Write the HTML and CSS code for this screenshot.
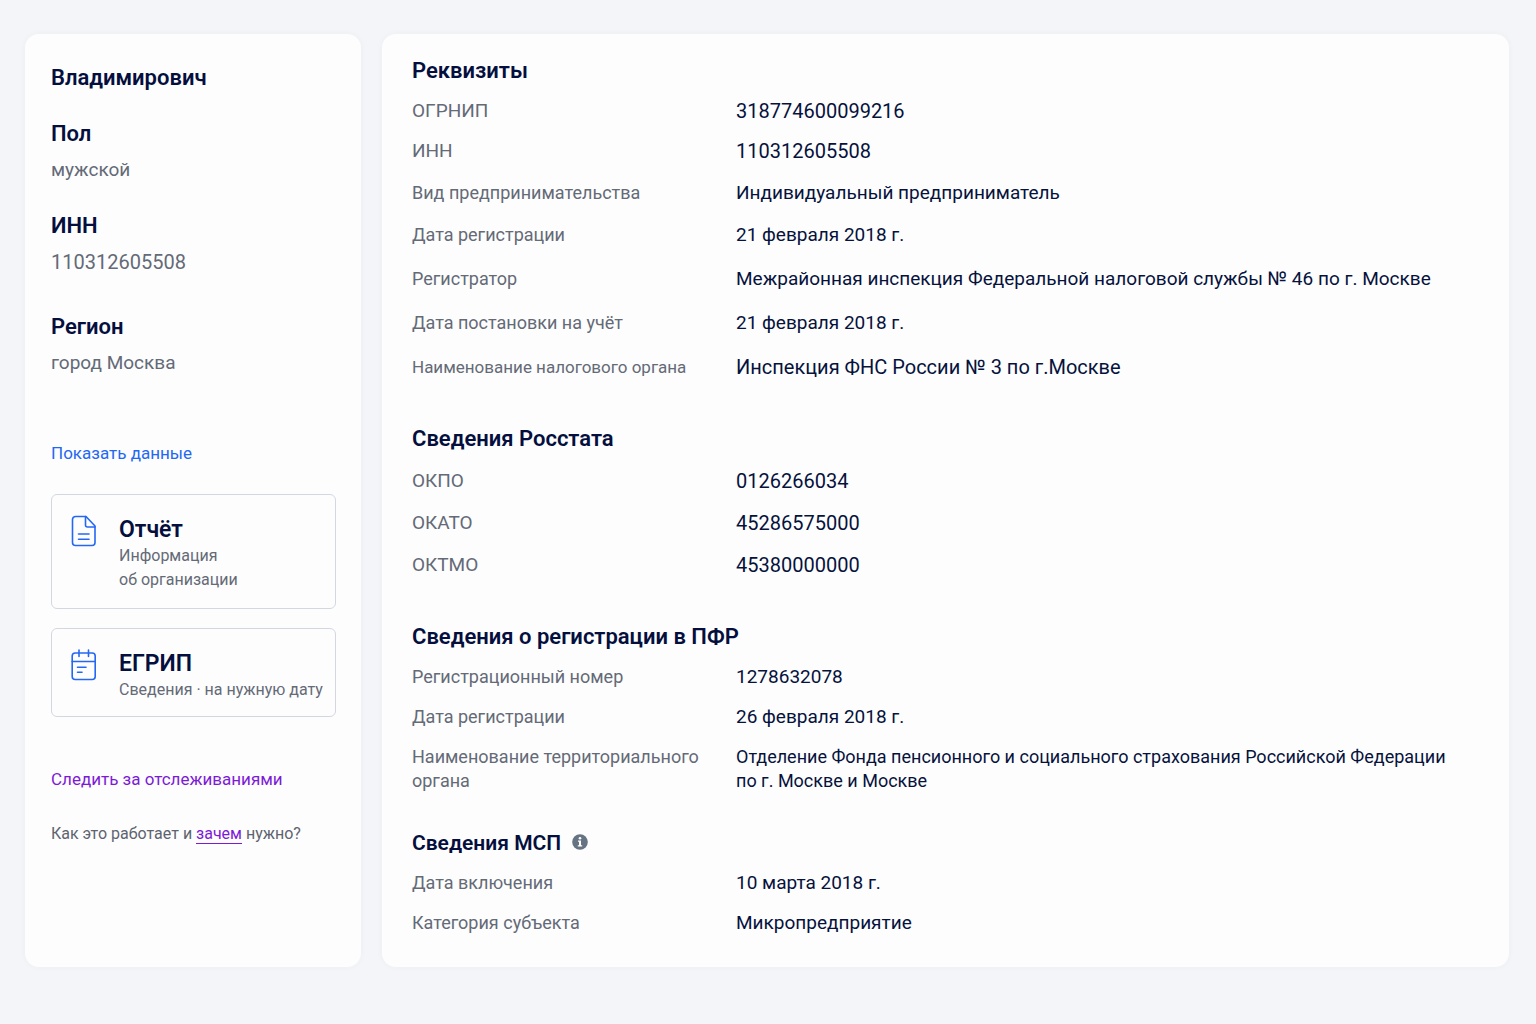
FILE: index.html
```
<!DOCTYPE html>
<html lang="ru">
<head>
    <meta charset="UTF-8">
    <meta name="viewport" content="width=device-width, initial-scale=1.0">
    <title>Индивидуальный предприниматель</title>
    <link rel="stylesheet" href="styles.css">
</head>
<body>

    <div class="page">
        <aside class="card sidebar">
            <h2 class="person-name">Владимирович</h2>

            <dl class="person-info">
                <div class="info-item">
                    <dt>Пол</dt>
                    <dd>мужской</dd>
                </div>
                <div class="info-item">
                    <dt>ИНН</dt>
                    <dd class="number">110312605508</dd>
                </div>
                <div class="info-item info-region">
                    <dt>Регион</dt>
                    <dd>город Москва</dd>
                </div>
            </dl>

            <a class="show-link" href="#">Показать данные</a>

            <div class="documents">
                <button type="button" class="doc-button doc-report">
                    <svg class="doc-icon" viewBox="0 0 26 32" fill="none" stroke="currentColor" stroke-width="1.6" stroke-linecap="round" stroke-linejoin="round" aria-hidden="true">
                        <path d="M15 1.5H4.500a3 3 0 0 0-3 3v23a3 3 0 0 0 3 3h16.500a3 3 0 0 0 3-3V11z"/>
                        <path d="M14.500 1.500V10a2 2 0 0 0 2 2h7.500"/>
                        <path d="M7.500 19h10.500M7.500 24.200h10.500"/>
                    </svg>
                    <span class="doc-text">
                        <span class="doc-title">Отчёт</span>
                        <span class="doc-note">Информация<br>об организации</span>
                    </span>
                </button>

                <button type="button" class="doc-button">
                    <svg class="doc-icon" viewBox="0 0 26 32" fill="none" stroke="currentColor" stroke-width="1.6" stroke-linecap="round" stroke-linejoin="round" aria-hidden="true">
                        <rect x="1.200" y="4" width="23" height="26.500" rx="3"/>
                        <path d="M1.200 12.500h23M8 1v6.500M17.500 1v6.500M6.500 18.300h8.500M6.500 23.300h4.500"/>
                    </svg>
                    <span class="doc-text">
                        <span class="doc-title">ЕГРИП</span>
                        <span class="doc-note">Сведения · на нужную дату</span>
                    </span>
                </button>
            </div>

            <a class="follow-link" href="#">Следить за отслеживаниями</a>
            <p class="help">Как это работает и <a href="#">зачем</a> нужно?</p>
        </aside>

        <main class="card details">
            <section>
                <h2>Реквизиты</h2>
                <dl>
                    <div class="row row-code"><dt>ОГРНИП</dt><dd>318774600099216</dd></div>
                    <div class="row row-code"><dt>ИНН</dt><dd>110312605508</dd></div>
                    <div class="row row-medium"><dt>Вид предпринимательства</dt><dd>Индивидуальный предприниматель</dd></div>
                    <div class="row row-medium"><dt>Дата регистрации</dt><dd>21 февраля 2018 г.</dd></div>
                    <div class="row row-large"><dt>Регистратор</dt><dd>Межрайонная инспекция Федеральной налоговой службы № 46 по г. Москве</dd></div>
                    <div class="row row-large"><dt>Дата постановки на учёт</dt><dd>21 февраля 2018 г.</dd></div>
                    <div class="row row-large row-tax"><dt>Наименование налогового органа</dt><dd>Инспекция ФНС России № 3 по г.Москве</dd></div>
                </dl>
            </section>

            <section>
                <h2>Сведения Росстата</h2>
                <dl>
                    <div class="row row-code row-medium"><dt>ОКПО</dt><dd>0126266034</dd></div>
                    <div class="row row-code row-medium"><dt>ОКАТО</dt><dd>45286575000</dd></div>
                    <div class="row row-code row-medium"><dt>ОКТМО</dt><dd>45380000000</dd></div>
                </dl>
            </section>

            <section>
                <h2>Сведения о регистрации в ПФР</h2>
                <dl>
                    <div class="row"><dt>Регистрационный номер</dt><dd>1278632078</dd></div>
                    <div class="row"><dt>Дата регистрации</dt><dd>26 февраля 2018 г.</dd></div>
                    <div class="row row-long"><dt>Наименование территориального органа</dt><dd>Отделение Фонда пенсионного и социального страхования Российской Федерации по&nbsp;г.&nbsp;Москве и Москве</dd></div>
                </dl>
            </section>

            <section class="section-msp">
                <h2>
                    Сведения МСП
                    <button type="button" class="info-button" aria-label="Подробнее">
                        <svg viewBox="0 0 16 16" aria-hidden="true">
                            <circle cx="8" cy="8" r="7.800" fill="#667382"/>
                            <circle cx="8" cy="4.200" r="1.300" fill="#fff"/>
                            <path d="M6 6.500h3v4.700h1.200v1.300H5.800v-1.300H7V7.800H6z" fill="#fff"/>
                        </svg>
                    </button>
                </h2>
                <dl>
                    <div class="row"><dt>Дата включения</dt><dd>10 марта 2018 г.</dd></div>
                    <div class="row"><dt>Категория субъекта</dt><dd>Микропредприятие</dd></div>
                </dl>
            </section>
        </main>
    </div>

</body>
</html>
```

FILE: styles.css
```
* { box-sizing: border-box; }
body { margin: 0; min-height: 100vh; font-family: Roboto, Arial, sans-serif; font-size: 19px; line-height: 24px; color: #06123c; background: #f4f5f8; }
h2, dl, dd, p { margin: 0; }
h2 { font-size: 22px; line-height: 24px; font-weight: 600; color: #040f3d; }
a { text-decoration: none; }
button { font-family: inherit; color: inherit; cursor: pointer; }
.number { font-size: 20px; }

.page { display: flex; gap: 21px; padding: 34px 27px 32px 25px; }
.card { background: #fdfdfe; border-radius: 14px; box-shadow: 0 0 6px rgba(60, 80, 120, 0.04); }

.sidebar { flex: 0 0 336px; min-width: 0; padding: 32px 25px 31px 26px; }
.person-info { display: flex; flex-direction: column; gap: 32px; margin-top: 32px; }
.info-item dt { font-size: 22px; font-weight: 600; color: #040f3d; }
.info-item dd { margin-top: 12px; color: #646a76; }
.info-region { margin-top: 9px; }

.show-link { display: block; margin-top: 66px; font-size: 17px; color: #2468f2; }
.documents { display: flex; flex-direction: column; gap: 19px; margin-top: 29px; }
.doc-button { display: flex; align-items: flex-start; gap: 22px; padding: 20px 12px 14px 19px; background: #fdfdfe; border: 1px solid #d3d8e0; border-radius: 6px; text-align: left; }
.doc-report { padding-bottom: 16px; }
.doc-icon { flex: none; width: 26px; height: 32px; color: #2468f2; }
.doc-text, .doc-title, .doc-note { display: block; }
.doc-title { font-size: 23px; line-height: 29px; font-weight: 600; color: #040f3d; }
.doc-note { font-size: 16px; line-height: 24px; color: #646a76; white-space: nowrap; }

.follow-link { display: block; margin-top: 50px; font-size: 17px; color: #7c1bd6; }
.help { margin-top: 31px; font-size: 16px; color: #5d636f; }
.help a { color: #7c1bd6; border-bottom: 1px solid #7c1bd6; }

.details { flex: 1; min-width: 0; padding: 25px 36px 32px 30px; }
.details section + section { margin-top: 48px; }
.details .section-msp { margin-top: 38px; }
.section-msp h2 { font-size: 21px; }
.row { display: grid; grid-template-columns: 324px 1fr; margin-top: 16px; }
.row dt { padding-right: 20px; font-size: 18px; color: #646a76; }
.row-medium { margin-top: 18px; }
.row-large { margin-top: 20px; }
.row-code dt { font-size: 19px; }
.row-code dd { font-size: 20px; }
.row-tax dt { font-size: 17px; }
.row-tax dd { font-size: 20px; }
.row-long dd { font-size: 18px; }
.info-button { display: inline-flex; margin-left: 6px; padding: 0; border: 0; background: none; }
.info-button svg { width: 16px; height: 16px; }
```
